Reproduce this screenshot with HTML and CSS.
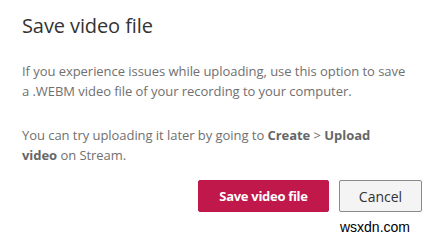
FILE: index.html
```html
<!DOCTYPE html>
<html>
<head>
<meta charset="utf-8">
<link rel="stylesheet" href="styles.css">
</head>
<body>
<div class="dialog">
  <h1 class="title">Save video file</h1>
  <p class="text">If you experience issues while uploading, use this option to save<br>a .WEBM video file of your recording to your computer.</p>
  <p class="text second">You can try uploading it later by going to <b>Create</b> &gt; <b>Upload</b><br><b>video</b> on Stream.</p>
  <div class="actions">
    <button class="btn primary">Save video file</button>
    <button class="btn secondary">Cancel</button>
  </div>
  <div class="mark">wsxdn.com</div>
</div>
</body>
</html>
```
FILE: styles.css
```css
html, body {
  margin: 0;
  padding: 0;
  background: #ffffff;
}
.dialog {
  width: 444px;
  height: 234px;
  box-sizing: border-box;
  padding: 12px 22px 0 22px;
  font-family: "Open Sans", "Noto Sans", sans-serif;
}
.title {
  margin: 0;
  font-size: 20px;
  line-height: 28px;
  font-weight: 400;
  letter-spacing: -0.1px;
  color: #333333;
}
.text {
  margin: 21px 0 0 0;
  font-size: 13px;
  line-height: 20px;
  letter-spacing: -0.05px;
  color: #707070;
  white-space: nowrap;
}
.text b {
  font-weight: 700;
  color: #666666;
}
.text.second {
  margin-top: 24px;
}
.actions {
  display: flex;
  justify-content: flex-end;
  gap: 10px;
  margin-top: 15px;
}
.btn {
  height: 32px;
  box-sizing: border-box;
  font-family: "Open Sans", "Noto Sans", sans-serif;
  font-size: 13px;
  border-radius: 2px;
  padding: 0;
  white-space: nowrap;
}
.primary {
  width: 131px;
  background: #c0184b;
  color: #ffffff;
  border: 1px solid #c0184b;
  font-weight: 700;
  letter-spacing: -0.3px;
}
.secondary {
  width: 83px;
  background: #f4f4f4;
  color: #333333;
  border: 1px solid #8a8a8a;
  font-weight: 400;
  font-size: 14px;
}
.mark {
  text-align: right;
  margin-right: 12px;
  margin-top: 7px;
  font-family: "Liberation Sans", sans-serif;
  font-size: 14px;
  line-height: 16px;
  color: #000000;
}
```
